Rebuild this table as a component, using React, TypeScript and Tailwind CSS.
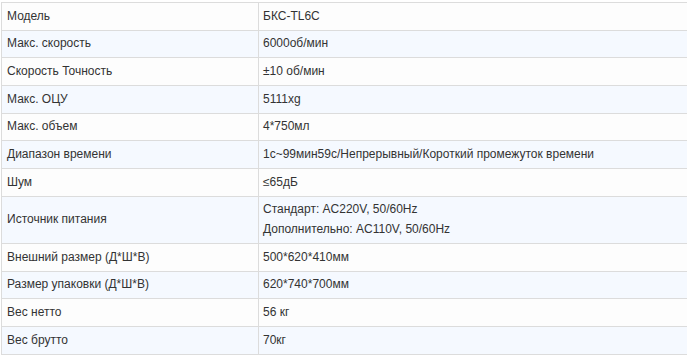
import React from "react";

const rows: [string, string[]][] = [
  ["Модель", ["БКС-TL6C"]],
  ["Макс. скорость", ["6000об/мин"]],
  ["Скорость Точность", ["±10 об/мин"]],
  ["Макс. ОЦУ", ["5111xg"]],
  ["Макс. объем", ["4*750мл"]],
  ["Диапазон времени", ["1с~99мин59с/Непрерывный/Короткий промежуток времени"]],
  ["Шум", ["≤65дБ"]],
  ["Источник питания", ["Стандарт: AC220V, 50/60Hz", "Дополнительно: AC110V, 50/60Hz"]],
  ["Внешний размер (Д*Ш*В)", ["500*620*410мм"]],
  ["Размер упаковки (Д*Ш*В)", ["620*740*700мм"]],
  ["Вес нетто", ["56 кг"]],
  ["Вес брутто", ["70кг"]],
];

export default function App() {
  return (
    <div className="w-[687px] h-[356px] overflow-hidden bg-white pt-[2px] pl-[1px]">
      <table
        className="w-[690px] border-collapse text-[12px] leading-[19.5px] text-[#333333]"
        style={{ fontFamily: '"Liberation Sans", Arial, sans-serif' }}
      >
        <tbody>
          {rows.map(([k, v], i) => (
            <tr key={i} className={i % 2 === 0 ? "bg-[#fdfdfd]" : "bg-[#f5f9ff]"}>
              <td className="w-[257px] border border-[#dcdcdc] px-[5px] py-[3.6px] align-middle">{k}</td>
              <td className="border border-[#dcdcdc] px-[4px] py-[3.6px] align-middle">
                {v.map((t, j) => (
                  <div key={j}>{t}</div>
                ))}
              </td>
            </tr>
          ))}
        </tbody>
      </table>
    </div>
  );
}
